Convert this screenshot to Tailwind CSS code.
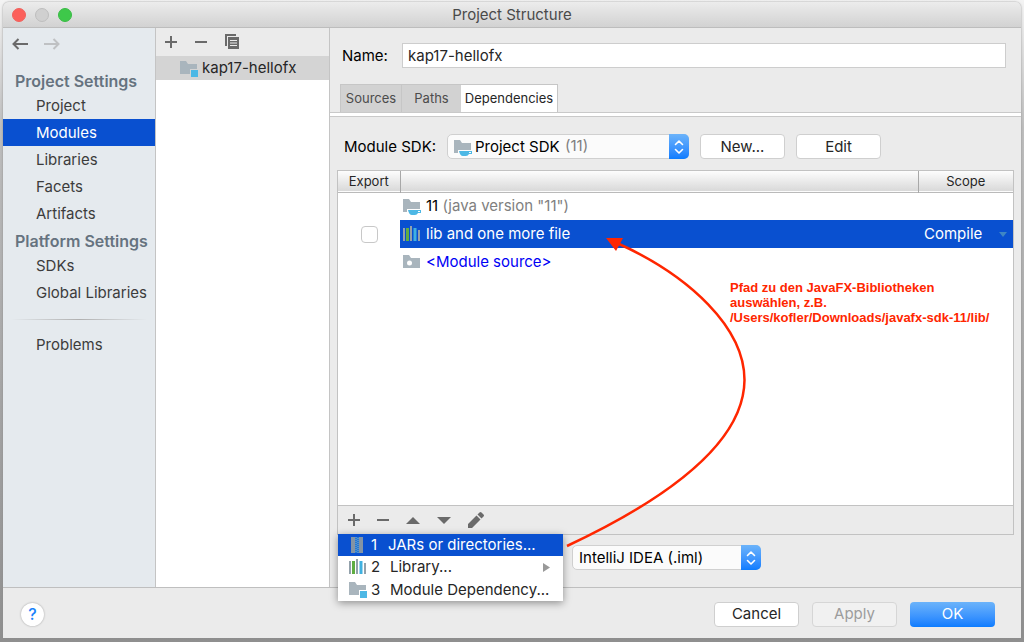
<!DOCTYPE html>
<html lang="en">
<head>
    <meta charset="UTF-8">
    <meta name="viewport" content="width=device-width, initial-scale=1.0">
    <title>Project Structure</title>
    <script src="https://cdn.jsdelivr.net/npm/@tailwindcss/browser@4"></script>
    <style>
        body {
            font-family: 'Inter', 'Liberation Sans', sans-serif;
        }
    </style>
</head>
<body class="h-screen flex flex-col overflow-hidden bg-linear-to-b from-[#f4f4f4] via-[#bdbdbd] via-20% to-[#8f8f8f] px-[3px] pt-[2px] pb-[4px] text-[15px] leading-5 text-[#262626]">

    <!-- Icons used more than once -->
    <svg class="hidden">
        <symbol id="icon-module" viewBox="0 0 18 17">
            <path fill="#a9b5bd" d="M0 1h6l2 3h9v5h-7v5H0z"/>
            <path fill="#4db8e5" d="M11 10h7v7h-7z"/>
        </symbol>
        <symbol id="icon-sdk" viewBox="0 0 18 17">
            <path fill="#a9b5bd" d="M0 1h6l2 3h9v7H4v3H0z"/>
            <path fill="#4db8e5" fill-rule="evenodd" d="M5 12h13v3h-3q-1 2-3 2H9q-3 0-4-5zm10 1v1h2v-1z"/>
        </symbol>
        <symbol id="icon-library" viewBox="0 0 18 16">
            <path fill="#93a1ab" d="M0 2h2v13H0zM7 0h2v15H7zM15 4h2v11h-2z"/>
            <path fill="#5fad43" d="M3 2h3v13H3z"/>
            <path fill="#3fb1e0" d="M10.500 2h3v13h-3z"/>
        </symbol>
        <symbol id="icon-plus" viewBox="0 0 12 12">
            <path fill="none" stroke="#6a6a6a" stroke-width="2" d="M6 0v12M0 6h12"/>
        </symbol>
        <symbol id="icon-minus" viewBox="0 0 12 12">
            <path fill="none" stroke="#6a6a6a" stroke-width="2" d="M0 6h12"/>
        </symbol>
        <symbol id="icon-updown" viewBox="0 0 10 16">
            <path fill="none" stroke="#fff" stroke-width="1.6" stroke-linecap="round" stroke-linejoin="round" d="M1.500 5.500 5 2l3.500 3.500M1.500 10.500 5 14l3.500-3.500"/>
        </symbol>
    </svg>

    <div class="flex-1 min-h-0 flex flex-col rounded-t-md bg-[#ebebeb] shadow-[0_0_2px_#888]">

        <!-- Title bar -->
        <header class="h-[26px] shrink-0 grid grid-cols-[1fr_auto_1fr] items-center px-[9px] rounded-t-md border-b border-[#bdbdbd] bg-linear-to-b from-[#ececec] to-[#d2d2d2]">
            <div class="flex gap-[9px]">
                <button aria-label="Close" class="size-[14px] rounded-full bg-[#fc605b] border border-[#f0625d]"></button>
                <button aria-label="Minimize" class="size-[14px] rounded-full bg-[#d0d0d0] border border-[#bebebe]"></button>
                <button aria-label="Zoom" class="size-[14px] rounded-full bg-[#3ec84a] border border-[#3abb45]"></button>
            </div>
            <h1 class="pt-px text-[#4a4a4a]">Project Structure</h1>
        </header>

        <div class="flex-1 min-h-0 flex border-b border-[#bfbfbf]">

            <!-- Sidebar -->
            <nav class="w-[153px] shrink-0 border-r border-[#c4c4c4] bg-[#e5eaee] text-[#3c3c3c]">
                <div class="h-[39px] flex items-start gap-4 pl-[9px] pt-[10px]">
                    <button aria-label="Back">
                        <svg class="w-4 h-3" viewBox="0 0 16 12" fill="none" stroke="#6a6a6a" stroke-width="2"><path d="M1.500 6H16M6.500 1l-5 5 5 5"/></svg>
                    </button>
                    <button aria-label="Forward">
                        <svg class="w-4 h-3" viewBox="0 0 16 12" fill="none" stroke="#bfc1c3" stroke-width="2"><path d="M14.500 6H0M9.500 1l5 5-5 5"/></svg>
                    </button>
                </div>
                <h2 class="h-[25px] pl-3 pt-1 text-base leading-5 font-semibold whitespace-nowrap text-[#66737f]">Project Settings</h2>
                <a href="#" class="flex items-center h-[27px] pl-[33px]">Project</a>
                <a href="#" class="flex items-center h-[27px] pl-[33px] bg-[#0950d0] text-white">Modules</a>
                <a href="#" class="flex items-center h-[27px] pl-[33px]">Libraries</a>
                <a href="#" class="flex items-center h-[27px] pl-[33px]">Facets</a>
                <a href="#" class="flex items-center h-[27px] pl-[33px]">Artifacts</a>
                <h2 class="h-[25px] pl-3 pt-1 text-base leading-5 font-semibold whitespace-nowrap text-[#66737f]">Platform Settings</h2>
                <a href="#" class="flex items-center h-[27px] pl-[33px]">SDKs</a>
                <a href="#" class="flex items-center h-[27px] pl-[33px] whitespace-nowrap">Global Libraries</a>
                <div class="h-px mx-2 mt-[13px] mb-[11px] bg-linear-to-r from-transparent via-[#b0b0b0] to-transparent"></div>
                <a href="#" class="flex items-center h-[27px] pl-[33px]">Problems</a>
            </nav>

            <!-- Module list -->
            <section class="w-[174px] shrink-0 border-r border-[#c4c4c4] bg-white">
                <div class="h-7 flex items-center gap-[18px] pl-[9px] bg-[#ebebeb]">
                    <button aria-label="Add module"><svg class="size-3"><use href="#icon-plus"/></svg></button>
                    <button aria-label="Remove module"><svg class="size-3"><use href="#icon-minus"/></svg></button>
                    <button aria-label="Copy module">
                        <svg class="size-4" viewBox="0 0 16 16">
                            <path fill="#6a6a6a" d="M0 0h11v2H2v10H0z"/>
                            <path fill="#6a6a6a" d="M3 3h11v12H3z"/>
                            <path stroke="#ebebeb" d="M5 6.500h7M5 9h7M5 11.500h7"/>
                        </svg>
                    </button>
                </div>
                <a href="#" class="flex items-center gap-1 h-6 pl-6 bg-[#d4d4d4]">
                    <svg class="w-[18px] h-[17px]"><use href="#icon-module"/></svg>
                    kap17-hellofx
                </a>
            </section>

            <!-- Module editor -->
            <main class="relative flex-1 min-w-0 flex flex-col">
                <div class="flex items-center pl-3 pr-[15px] pt-[15px]">
                    <label for="module-name" class="w-[60px] text-black">Name:</label>
                    <input id="module-name" type="text" value="kap17-hellofx" class="flex-1 min-w-0 h-[25px] px-[5px] border border-[#cdcdcd] bg-white">
                </div>

                <div role="tablist" class="flex h-7 mt-4 pl-[10px] text-[13px]">
                    <button role="tab" class="w-[61px] pb-[2px] border-t border-l border-[#c6c6c6] bg-[#d2d2d2] text-[#4c4c4c]">Sources</button>
                    <button role="tab" class="w-[60px] pb-[2px] border-t border-l border-[#c6c6c6] bg-[#d2d2d2] text-[#4c4c4c]">Paths</button>
                    <button role="tab" aria-selected="true" class="w-[97px] pb-[2px] border-t border-r border-[#c6c6c6] bg-white">Dependencies</button>
                </div>
                <div class="h-[5px] shrink-0 border-y border-[#c9c9c9] bg-white"></div>

                <div class="flex items-center h-[25px] mt-[17px] pl-[14px] shrink-0">
                    <label for="module-sdk" class="w-[103px] text-black">Module SDK:</label>
                    <div class="relative flex w-[242px] h-[25px] mr-[11px]">
                        <select id="module-sdk" class="appearance-none w-full pl-[27px] rounded-[5px] border border-[#d0d0d0] bg-[#fbfbfb] text-black">
                            <option>Project SDK</option>
                        </select>
                        <svg class="absolute left-[7px] top-[5px] w-[18px] h-[17px] pointer-events-none"><use href="#icon-sdk"/></svg>
                        <span class="absolute left-[118px] top-[2px] text-[#808080] pointer-events-none">(11)</span>
                        <span class="absolute right-0 inset-y-0 w-5 flex items-center justify-center rounded-r-[5px] bg-linear-to-b from-[#6bb3fa] to-[#0a7cff] pointer-events-none">
                            <svg class="w-[10px] h-4"><use href="#icon-updown"/></svg>
                        </span>
                    </div>
                    <button class="w-[85px] h-[25px] mr-[11px] rounded-[4px] border border-[#cfcfcf] bg-white">New...</button>
                    <button class="w-[85px] h-[25px] rounded-[4px] border border-[#cfcfcf] bg-white">Edit</button>
                </div>

                <!-- Dependencies table -->
                <div class="flex-1 min-h-0 flex flex-col mt-[11px] ml-[7px] mr-[7px] border border-[#c2c2c2]">
                    <div class="flex-1 min-h-0 bg-white">
                        <table class="w-full table-fixed">
                            <thead class="text-[13px]">
                                <tr class="h-[21px] border-b border-[#bababa] bg-linear-to-b from-[#fdfdfd] to-[#d9d9d9]">
                                    <th class="w-[62px] p-0 font-normal border-r border-[#a8a8a8]">Export</th>
                                    <th class="p-0" aria-label="Dependency"></th>
                                    <th class="w-[95px] p-0 font-normal border-l border-[#a8a8a8]">Scope</th>
                                </tr>
                            </thead>
                            <tbody>
                                <tr class="h-7">
                                    <td></td>
                                    <td class="p-0">
                                        <div class="flex items-center gap-[5px] pl-[3px]">
                                            <svg class="w-[18px] h-[17px]"><use href="#icon-sdk"/></svg>
                                            <span class="text-black">11 <span class="text-[#808080]">(java version "11")</span></span>
                                        </div>
                                    </td>
                                    <td></td>
                                </tr>
                                <tr class="h-7">
                                    <td class="p-0">
                                        <input type="checkbox" aria-label="Export lib and one more file" class="block mx-auto appearance-none size-[17px] rounded-[4px] border border-[#c8c8c8] bg-white">
                                    </td>
                                    <td class="p-0 bg-[#0950d0] text-white">
                                        <div class="flex items-center gap-[5px] pl-[3px]">
                                            <svg class="w-[18px] h-4"><use href="#icon-library"/></svg>
                                            lib and one more file
                                        </div>
                                    </td>
                                    <td class="p-0 bg-[#0950d0] text-white">
                                        <div class="flex items-center justify-between pl-[6px] pr-[6px]">
                                            Compile
                                            <svg class="w-2 h-[5px]" viewBox="0 0 8 5"><path fill="#3f86c4" d="M0 0h8L4 5z"/></svg>
                                        </div>
                                    </td>
                                </tr>
                                <tr class="h-7">
                                    <td></td>
                                    <td class="p-0">
                                        <div class="flex items-center gap-[5px] pl-[3px] text-[#0000f5]">
                                            <svg class="w-[18px] h-4" viewBox="0 0 18 16">
                                                <path fill="#a9b5bd" d="M0 1h6l2 3h9v10H0z"/>
                                                <circle cx="6.500" cy="9" r="2.500" fill="#fff"/>
                                            </svg>
                                            &lt;Module source&gt;
                                        </div>
                                    </td>
                                    <td></td>
                                </tr>
                            </tbody>
                        </table>
                    </div>

                    <div class="relative h-[29px] shrink-0 flex items-center gap-[17px] pl-[10px] border-t border-[#c2c2c2]">
                        <button aria-label="Add"><svg class="size-3"><use href="#icon-plus"/></svg></button>
                        <button aria-label="Remove"><svg class="size-3"><use href="#icon-minus"/></svg></button>
                        <button aria-label="Move up"><svg class="w-[14px] h-[7px]" viewBox="0 0 14 7"><path fill="#6a6a6a" d="M0 7h14L7 0z"/></svg></button>
                        <button aria-label="Move down"><svg class="w-[14px] h-[7px]" viewBox="0 0 14 7"><path fill="#6a6a6a" d="M0 0h14L7 7z"/></svg></button>
                        <button aria-label="Edit">
                            <svg class="size-4" viewBox="0 0 16 16" fill="#6a6a6a"><path d="M0 16v-4l8.500-8.500 4 4L4 16zM9.500 2.500 11.500.500q1-1 2 0l2 2q1 1 0 2l-2 2z"/></svg>
                        </button>

                        <!-- Add menu -->
                        <div role="menu" class="absolute z-10 left-0 top-7 w-[225px] bg-white shadow-[0_2px_8px_#0006]">
                            <button role="menuitem" class="flex items-center w-full h-[22px] pl-[11px] bg-[#0950d0] text-white">
                                <svg class="w-[18px] h-4 mr-1" viewBox="0 0 18 16">
                                    <path fill="#8394a5" d="M2 0h4v16H2zM10 0h4v16h-4z"/>
                                    <path fill="#2478d0" d="M6 0h4v16H6z"/>
                                    <path fill="none" stroke="#7fa8d6" stroke-dasharray="1 1" d="M7 0v16M9 1v15"/>
                                </svg>
                                <span class="w-[17px] text-left">1</span>
                                JARs or directories...
                            </button>
                            <button role="menuitem" class="flex items-center w-full h-[22px] pl-[11px]">
                                <svg class="w-[18px] h-4 mr-1"><use href="#icon-library"/></svg>
                                <span class="w-[19px] text-left">2</span>
                                Library...
                                <svg class="w-[7px] h-[9px] ml-auto mr-[13px]" viewBox="0 0 7 9"><path fill="#999" d="M0 0v9l7-4.500z"/></svg>
                            </button>
                            <button role="menuitem" class="flex items-center w-full h-[23px] pl-[11px] whitespace-nowrap">
                                <svg class="w-[18px] h-[17px] mr-1"><use href="#icon-module"/></svg>
                                <span class="w-[19px] text-left">3</span>
                                Module Dependency...
                            </button>
                        </div>
                    </div>
                </div>

                <div class="flex h-[25px] shrink-0 mt-[10px] mb-[17px] pl-[242px]">
                    <div class="relative flex w-[189px]">
                        <select aria-label="Dependencies storage format" class="appearance-none w-full pl-[6px] rounded-[5px] border border-[#d0d0d0] bg-[#fbfbfb] text-black">
                            <option>IntelliJ IDEA (.iml)</option>
                        </select>
                        <span class="absolute right-0 inset-y-0 w-5 flex items-center justify-center rounded-r-[5px] bg-linear-to-b from-[#6bb3fa] to-[#0a7cff] pointer-events-none">
                            <svg class="w-[10px] h-4"><use href="#icon-updown"/></svg>
                        </span>
                    </div>
                </div>

                <!-- Annotation: arrow from the menu entry to the library row -->
                <svg class="absolute z-20 left-0 top-0 w-[691px] h-[560px] pointer-events-none" viewBox="330 28 691 560">
                    <path fill="none" stroke="#ff2600" stroke-width="2.500" d="M567 546C650 507 744 450 744.500 380 744.500 328 690 276 617 243"/>
                    <path fill="#ff2600" d="M606 238l17 0-7 13z"/>
                </svg>
                <p class="absolute z-20 left-[400px] top-[252px] font-['Liberation_Sans'] font-bold text-[13px] leading-[15px] text-[#ff2600]">Pfad zu den JavaFX-Bibliotheken<br>auswählen, z.B.<br>/Users/kofler/Downloads/javafx-sdk-11/lib/</p>
            </main>
        </div>

        <!-- Dialog buttons -->
        <footer class="h-[50px] shrink-0 flex items-center pt-[2px] pl-[18px] pr-[26px]">
            <button aria-label="Help" class="size-[23px] mr-auto rounded-full bg-white shadow-[0_0_2px_#999] text-base leading-5 text-[#1a82fb] font-medium">?</button>
            <button class="w-[85px] h-[25px] mr-[13px] rounded-[4px] border border-[#cfcfcf] bg-white">Cancel</button>
            <button disabled class="w-[85px] h-[25px] mr-[13px] rounded-[4px] border border-[#d6d6d6] bg-[#f1f1f1] text-[#9c9c9c]">Apply</button>
            <button class="w-[85px] h-[25px] rounded-[4px] bg-linear-to-b from-[#6bb3fa] to-[#0a7cff] text-white">OK</button>
        </footer>
    </div>

</body>
</html>
